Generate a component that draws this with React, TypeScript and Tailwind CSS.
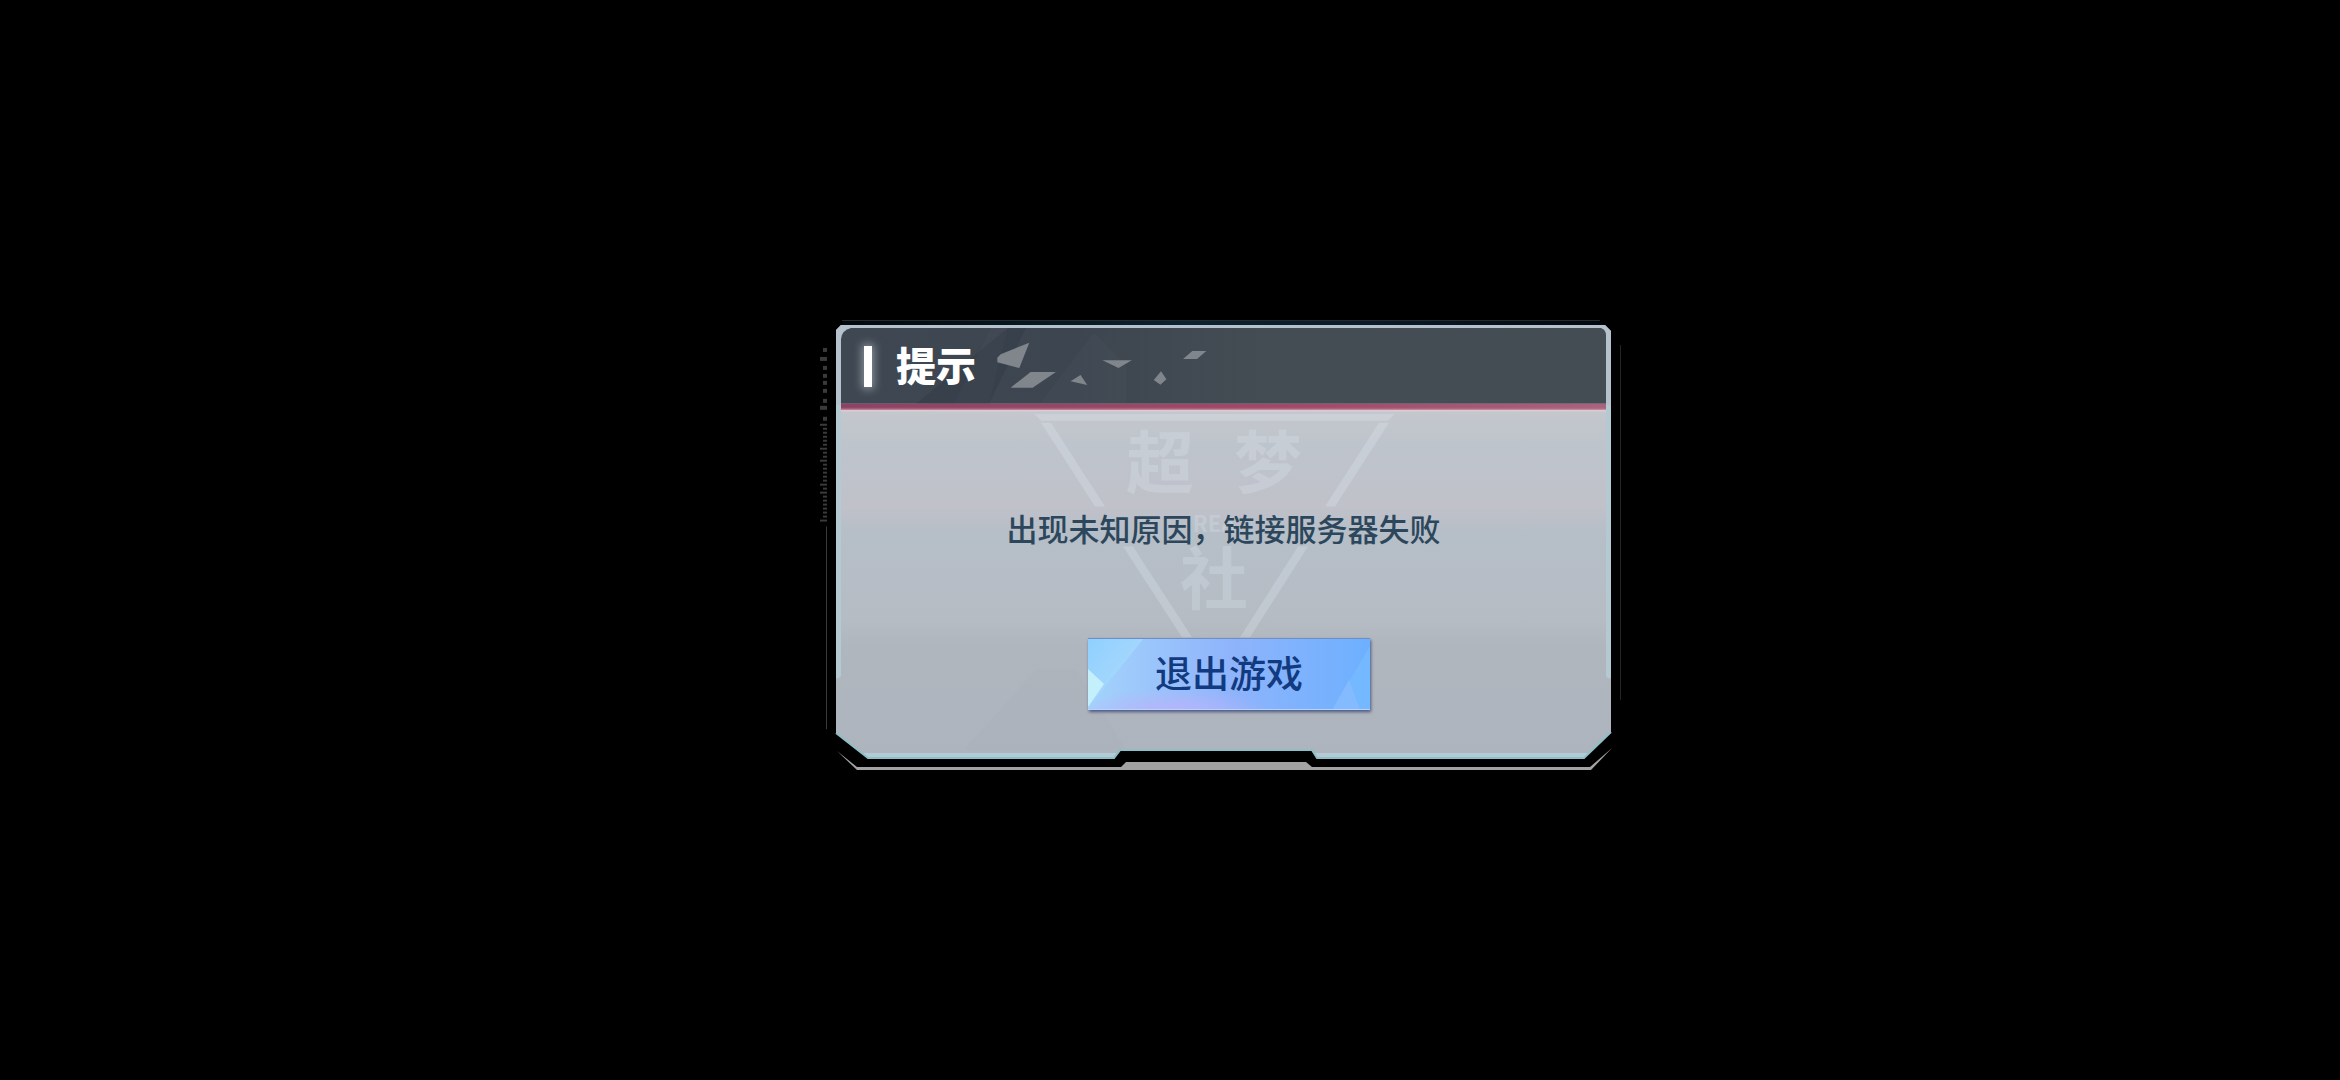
import React from 'react';

const FONT = "font-['Noto_Sans_CJK_SC',sans-serif]";

const PANEL =
  'M0 5 L5 0 H769 L775 6 V408 L748 434 H481 L476 426 H284 L278 434 H32 L0 409 Z';

// [y, height, wide]
const RULER_BLOCKS: [number, number, boolean][] = [
  [24, 4, false],
  [33, 4, true],
  [42, 4, false],
  [50, 4, false],
  [57, 4, false],
  [65, 4, false],
  [75, 4, false],
  [82, 4, true],
  [93, 4, false],
];

const RULER_TICKS = Array.from({ length: 25 }, (_, i) => 99 + i * 4);
const WIDE_TICKS = [0, 6, 9, 15, 17, 24];

function PanelFrame() {
  return (
    <svg
      className="absolute inset-0 h-full w-full overflow-visible"
      viewBox="0 0 775 446"
      preserveAspectRatio="none"
      aria-hidden="true"
    >
      <defs>
        <linearGradient id="body" x1="0" y1="0" x2="0" y2="1">
          <stop offset="0.2" stopColor="#c4c7cc" />
          <stop offset="0.28" stopColor="#bec4cc" />
          <stop offset="0.42" stopColor="#c0c1c9" />
          <stop offset="0.48" stopColor="#b6bec7" />
          <stop offset="0.68" stopColor="#b5bcc4" />
          <stop offset="0.74" stopColor="#b0b6be" />
          <stop offset="1" stopColor="#aeb4bd" />
        </linearGradient>
        <linearGradient id="header">
          <stop offset="0" stopColor="#3f4852" />
          <stop offset="0.3" stopColor="#3d4650" />
          <stop offset="0.6" stopColor="#454d54" />
        </linearGradient>
        <linearGradient id="accent">
          <stop offset="0" stopColor="#8c4363" />
          <stop offset="0.6" stopColor="#9f4a67" />
          <stop offset="1" stopColor="#a8637d" />
        </linearGradient>
        <linearGradient id="topGlow">
          <stop offset="0" stopColor="#03090d" />
          <stop offset="0.45" stopColor="#0b2430" />
          <stop offset="0.7" stopColor="#0b1a29" />
          <stop offset="1" stopColor="#03080d" />
        </linearGradient>
        <clipPath id="panelClip">
          <path d={PANEL} />
        </clipPath>
      </defs>

      <path d="M8 -4 H762 L769 0 H5 Z" fill="url(#topGlow)" />
      <path d="M6 -5 H764 V-4 H6 Z" fill="#242a2e" />

      <path d={PANEL} fill="url(#body)" />
      <g clipPath="url(#panelClip)">
        <path d="M0 0 H775 V87 H0 Z" fill="#b5c2cd" />
        <path d="M5 14 Q6 5 15 3 H765 Q770 5 770 10 V79 H5 Z" fill="url(#header)" />
        <path d="M155 3 L118 79 H153 L172 3 Z M258 8 L204 79 H290 V40 Z" fill="#ffffff" opacity="0.02" />
        <path d="M172 3 L80 79 H153 L190 3 Z" fill="#1f2a35" opacity="0.2" />
        <path d="M5 79 H770 V85 H5 Z" fill="url(#accent)" />
        <path d="M5 83 H770 V85 H5 Z" fill="#c76f8a" opacity="0.5" />
        <path d="M0 85 H775 V87 H0 Z" fill="#d8cbd3" />
        <path d="M0 80 H5 V352 L2 354 H0 Z M770 80 H775 V354 H772 L770 352 Z" fill="#b5c9d2" />
        <path d="M28 429 H752 V434 H28 Z" fill="#b2cbd5" />
        <path d="M128 426 L200 345 H240 L290 426 Z" fill="#8f99a5" opacity="0.05" />
      </g>
      <path
        d="M0 409 L32 434 H278 L284 426 H476 L481 434 H748 L775 408"
        fill="none"
        stroke="#8dbfc8"
        strokeWidth="2"
      />

      <path
        d="M1 427 L21 443 H285 L290 438 H470 L476 443 H754 L776 424 L755 446 H21 Z"
        fill="#a3a3a3"
      />

      <g fill="#3a3a3a">
        {RULER_BLOCKS.map(([y, h, wide]) => (
          <rect key={y} x={wide ? -16 : -13} y={y - 1} width={wide ? 7 : 4} height={h} />
        ))}
        {RULER_TICKS.map((y, i) => (
          <rect
            key={y}
            x={WIDE_TICKS.includes(i) ? -16 : -13}
            y={y}
            width={WIDE_TICKS.includes(i) ? 7 : 4}
            height={2}
          />
        ))}
        <rect x="-10" y="202" width="1" height="203" />
        <rect x="784" y="20" width="1" height="356" opacity="0.6" />
      </g>

      <g fill="#e0ebf2" opacity="0.28">
        <path d="M198 89 H559 L552 96 H205 Z" />
        <path d="M205 98 H215 L269 182 H259 Z M543 98 H553 L499 182 H489 Z" />
        <path d="M287 222 H297 L356 313 H346 Z M462 222 H472 L414 313 H404 Z" />
      </g>
      <g
        className={`${FONT} font-bold`}
        fill="#e0ebf2"
        opacity="0.25"
        textAnchor="middle"
      >
        <text x="324" y="163" fontSize="68">超</text>
        <text x="432" y="163" fontSize="68">梦</text>
        <text x="378" y="280" fontSize="68">社</text>
        <text x="378" y="207" fontSize="22">REA</text>
      </g>
    </svg>
  );
}

function Shards() {
  return (
    <svg className="ml-5 h-12 w-[213px]" viewBox="0 0 640 144" fill="#81868c" aria-hidden="true">
      <path d="M100 2 L70 78 L4 61 V47 L14 37 Z" />
      <path d="M104 90 H180 L110 137 H44 Z" />
      <path d="M254 99 L274 129 L224 118 Z" />
      <path d="M320 55 H408 L368 78 Z" />
      <path d="M496 88 L512 112 L494 128 L474 114 Z" />
      <path d="M590 27 H632 L604 51 H562 Z" />
    </svg>
  );
}

function ExitButton() {
  return (
    <button
      type="button"
      className="relative h-[72px] w-[282px] bg-linear-to-r from-[#a4d3fb] via-[#8fb4fb] to-[#6cb0ff] shadow-[1px_2px_3px_#4b5880]"
    >
      <svg
        className="absolute inset-0 h-full w-full"
        viewBox="0 0 282 72"
        preserveAspectRatio="none"
        aria-hidden="true"
      >
        <defs>
          <radialGradient id="violet" cx="0.3" cy="1.05" r="0.35">
            <stop offset="0" stopColor="#bcb2fa" />
            <stop offset="1" stopColor="#bcb2fa" stopOpacity="0" />
          </radialGradient>
          <linearGradient id="ice" x1="0" y1="0" x2="1" y2="1">
            <stop offset="0" stopColor="#8fd0ff" />
            <stop offset="1" stopColor="#b4dcfb" />
          </linearGradient>
        </defs>
        <path d="M0 0 H282 V72 H0 Z" fill="url(#violet)" />
        <path d="M0 0 H56 L0 70 Z" fill="url(#ice)" />
        <path d="M0 31 L16 46 L0 69 Z" fill="#c3f0fa" />
        <path d="M282 8 L244 72 H282 Z" fill="#74b8ff" />
        <path d="M261 42 L244 72 H272 Z" fill="#84bbff" />
        <path d="M0 71 H282 V72 H0 Z" fill="#b9d2ff" />
        <path d="M0 0 H282 V1 H0 Z" fill="#6f8fc4" />
      </svg>
      <span className="relative block pb-1 text-[37px] leading-[40px] font-medium text-[#123a80]">
        退出游戏
      </span>
    </button>
  );
}

export default function App() {
  return (
    <main className={`flex min-h-screen items-center justify-center bg-black pt-[14px] pl-[107px] ${FONT}`}>
      <section
        role="alertdialog"
        aria-labelledby="dialog-title"
        aria-describedby="dialog-message"
        className="relative w-[775px] max-w-full"
      >
        <PanelFrame />
        <header className="relative flex h-[87px] items-center pb-1 pl-7">
          <span className="h-[41px] w-2 bg-white shadow-[0_0_8px_2px_#8a939b]" />
          <h1 id="dialog-title" className="ml-6 pb-1 text-[40px] leading-[40px] font-black text-white">
            提示
          </h1>
          <Shards />
        </header>
        <div className="relative flex flex-col items-center pt-24 pb-[60px]">
          <p id="dialog-message" className="text-[31px] leading-[40px] font-medium text-[#2c475c]">
            出现未知原因，链接服务器失败
          </p>
          <div className="mt-[90px] pl-[11px]">
            <ExitButton />
          </div>
        </div>
      </section>
    </main>
  );
}
